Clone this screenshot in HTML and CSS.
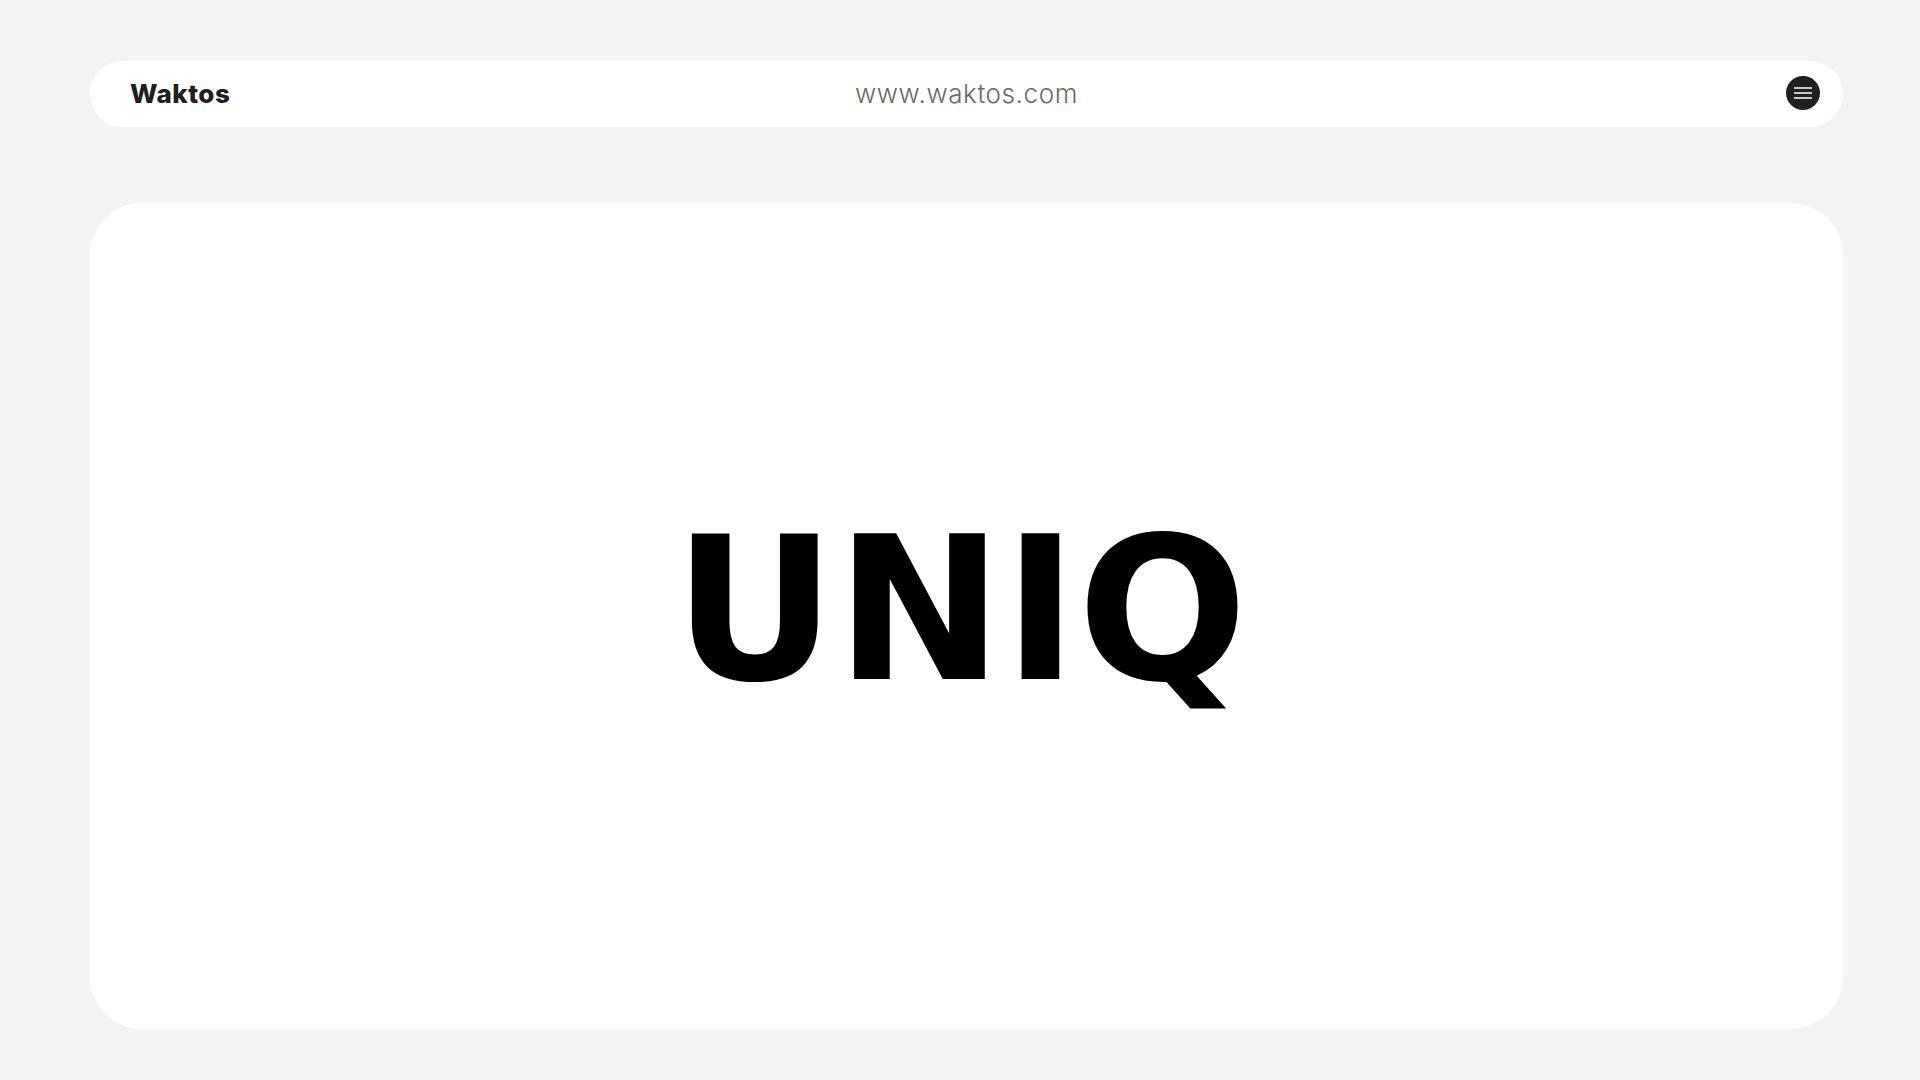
FILE: index.html
```html
<!DOCTYPE html>
<html lang="en">
<head>
<meta charset="utf-8">
<title>Waktos</title>
<link rel="stylesheet" href="styles.css">
</head>
<body>
<div class="page">
  <header class="topbar">
    <div class="logo">Waktos</div>
    <div class="url">www.waktos.com</div>
    <button class="menu" aria-label="Menu">
      <svg width="18" height="12" viewBox="0 0 18 12"><path d="M0 1h18M0 6h18M0 11h18" stroke="#fff" stroke-width="1.4"/></svg>
    </button>
  </header>
  <main class="card">
    <h1 class="title">UNIQ</h1>
  </main>
</div>
</body>
</html>
```
FILE: styles.css
```css
html, body {
  margin: 0;
  padding: 0;
  background: #f4f2f3;
}
.page {
  width: 1920px;
  height: 1080px;
  box-sizing: border-box;
  padding: 61px 77px 0 90px;
  display: flex;
  flex-direction: column;
  gap: 76px;
}
.topbar {
  height: 66px;
  background: #fff;
  border-radius: 33px;
  display: flex;
  align-items: center;
  justify-content: space-between;
  padding: 0 23px 0 40px;
  position: relative;
}
.logo {
  font-family: "Inter", sans-serif;
  font-weight: 800;
  font-size: 26px;
  color: #1f1d1e;
  letter-spacing: 0.5px;
  margin-top: -2px;
}
.url {
  position: absolute;
  left: 50%;
  top: 50%;
  transform: translate(-50%, -52%);
  font-family: "Inter", sans-serif;
  font-weight: 300;
  font-size: 26px;
  letter-spacing: 0.6px;
  color: #6a6869;
}
.menu {
  width: 34px;
  height: 34px;
  border-radius: 50%;
  background: #221f20;
  border: 0;
  padding: 0;
  margin-top: -2px;
  display: flex;
  align-items: center;
  justify-content: center;
}
.card {
  height: 826px;
  background: #fff;
  border-radius: 52px;
  display: flex;
  align-items: center;
  justify-content: center;
}
.title {
  margin: 0 12px 12px 0;
  font-family: "DejaVu Sans", sans-serif;
  font-weight: 700;
  font-size: 200px;
  letter-spacing: 0;
  color: #000;
  line-height: 1;
}
```
